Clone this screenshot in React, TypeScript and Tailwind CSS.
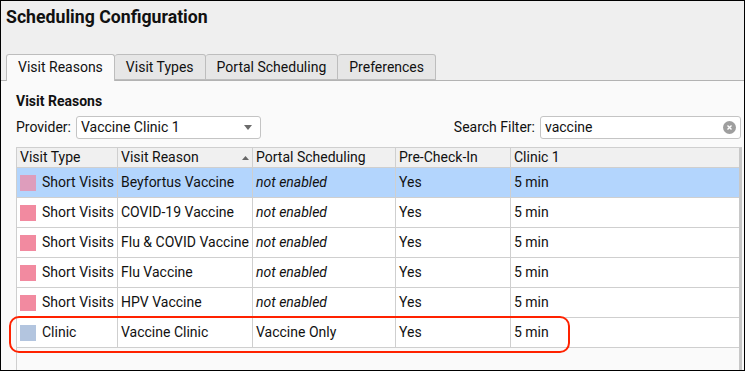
import React from "react"

const ROWS = [
  { type: "Short Visits", reason: "Beyfortus Vaccine", portal: "not enabled", pre: "Yes", clinic: "5 min", color: "bg-[#f28aa0]", selected: true },
  { type: "Short Visits", reason: "COVID-19 Vaccine", portal: "not enabled", pre: "Yes", clinic: "5 min", color: "bg-[#f28aa0]" },
  { type: "Short Visits", reason: "Flu & COVID Vaccine", portal: "not enabled", pre: "Yes", clinic: "5 min", color: "bg-[#f28aa0]" },
  { type: "Short Visits", reason: "Flu Vaccine", portal: "not enabled", pre: "Yes", clinic: "5 min", color: "bg-[#f28aa0]" },
  { type: "Short Visits", reason: "HPV Vaccine", portal: "not enabled", pre: "Yes", clinic: "5 min", color: "bg-[#f28aa0]" },
  { type: "Clinic", reason: "Vaccine Clinic", portal: "Vaccine Only", pre: "Yes", clinic: "5 min", color: "bg-[#b3c5df]" },
]

const TABS = ["Visit Reasons", "Visit Types", "Portal Scheduling", "Preferences"]

export default function App() {
  return (
    <div className="w-[745px] h-[371px] bg-[#efefef] border border-black overflow-hidden font-['Roboto',sans-serif] text-[14px] text-[#111] flex flex-col">
      {/* Title */}
      <div className="h-[36px] px-[5px] pt-[5px] text-[17.7px] font-bold leading-[22px]">Scheduling Configuration</div>

      {/* Tabs */}
      <div className="mt-[17px] flex pl-[5px] h-[26px]">
        {TABS.map((t, i) => (
          <div
            key={t}
            className={
              i === 0
                ? "px-[11px] bg-[#fafafa] border border-[#bdbdbd] border-b-0 rounded-t-[3px] leading-[25px] relative z-10 h-[27px]"
                : "px-[11px] bg-[#e6e6e6] border border-[#bdbdbd] border-l-0 rounded-t-[3px] leading-[25px] h-[26px]"
            }
          >
            {t}
          </div>
        ))}
      </div>

      {/* Panel */}
      <div className="flex-1 bg-[#fafafa] border-t border-[#b3b3b3] flex flex-col">
        <div className="px-[15px] pt-[11px] font-bold leading-[18px]">Visit Reasons</div>

        <div className="flex items-center px-[15px] mt-[6px] h-[23px]">
          <span className="mr-[5px]">Provider:</span>
          <div className="w-[185px] h-[23px] border border-[#c4c4c4] rounded-[3px] bg-white flex items-center justify-between pl-[4px] pr-[8px]">
            <span>Vaccine Clinic 1</span>
            <svg width="8" height="5" viewBox="0 0 8 5"><path d="M0 0h8L4 5z" fill="#6b6b6b" /></svg>
          </div>
          <span className="ml-auto mr-[5px]">Search Filter:</span>
          <div className="w-[201px] h-[23px] border border-[#c4c4c4] rounded-[3px] bg-white flex items-center justify-between pl-[4px] pr-[4px] -mr-[12px]">
            <span>vaccine</span>
            <svg width="13" height="13" viewBox="0 0 13 13">
              <circle cx="6.5" cy="6.5" r="6.5" fill="#9e9e9e" />
              <path d="M4.5 4.5l4 4M8.5 4.5l-4 4" stroke="#fff" strokeWidth="1.4" />
            </svg>
          </div>
        </div>

        {/* Table */}
        <div className="relative flex-1 mt-[8px] ml-[15px] mr-[2px] border-l border-t border-r-[3px] border-[#cfcfcf] border-r-[#c8c8c8] bg-[#fafafa]">
          <div className="flex h-[20px] bg-[#f0f0f0] border-b border-[#cfcfcf] leading-[19px]">
            <div className="w-[101px] px-[3px] border-r border-[#cfcfcf]">Visit Type</div>
            <div className="w-[135px] px-[3px] border-r border-[#cfcfcf] flex items-center justify-between">
              <span>Visit Reason</span>
              <svg width="7" height="4" viewBox="0 0 7 4"><path d="M0 4h7L3.5 0z" fill="#666" /></svg>
            </div>
            <div className="w-[143px] px-[3px] border-r border-[#cfcfcf]">Portal Scheduling</div>
            <div className="w-[115px] px-[3px] border-r border-[#cfcfcf]">Pre-Check-In</div>
            <div className="flex-1 px-[3px]">Clinic 1</div>
          </div>
          {ROWS.map((r) => (
            <div
              key={r.reason}
              className={`flex h-[30px] border-b border-[#cfcfcf] items-stretch ${r.selected ? "bg-[#b3d5fd]" : "bg-white"}`}
            >
              <div className="w-[101px] pl-[3px] border-r border-[#cfcfcf] flex items-center gap-[6px]">
                <span className={`w-[16px] h-[16px] ${r.selected ? "bg-[#de9dbc]" : r.color}`} />
                <span>{r.type}</span>
              </div>
              <div className="w-[135px] px-[3px] border-r border-[#cfcfcf] flex items-center">{r.reason}</div>
              <div className={`w-[143px] px-[3px] border-r border-[#cfcfcf] flex items-center ${r.portal === "not enabled" ? "italic" : ""}`}>
                {r.portal}
              </div>
              <div className="w-[115px] px-[3px] border-r border-[#cfcfcf] flex items-center">{r.pre}</div>
              <div className="flex-1 px-[3px] flex items-center">{r.clinic}</div>
            </div>
          ))}

          {/* highlight */}
          <div className="absolute left-[-8px] top-[168px] w-[561px] h-[37px] border-[2px] border-[#ff2200] rounded-[10px] pointer-events-none" />
        </div>
      </div>
    </div>
  )
}
